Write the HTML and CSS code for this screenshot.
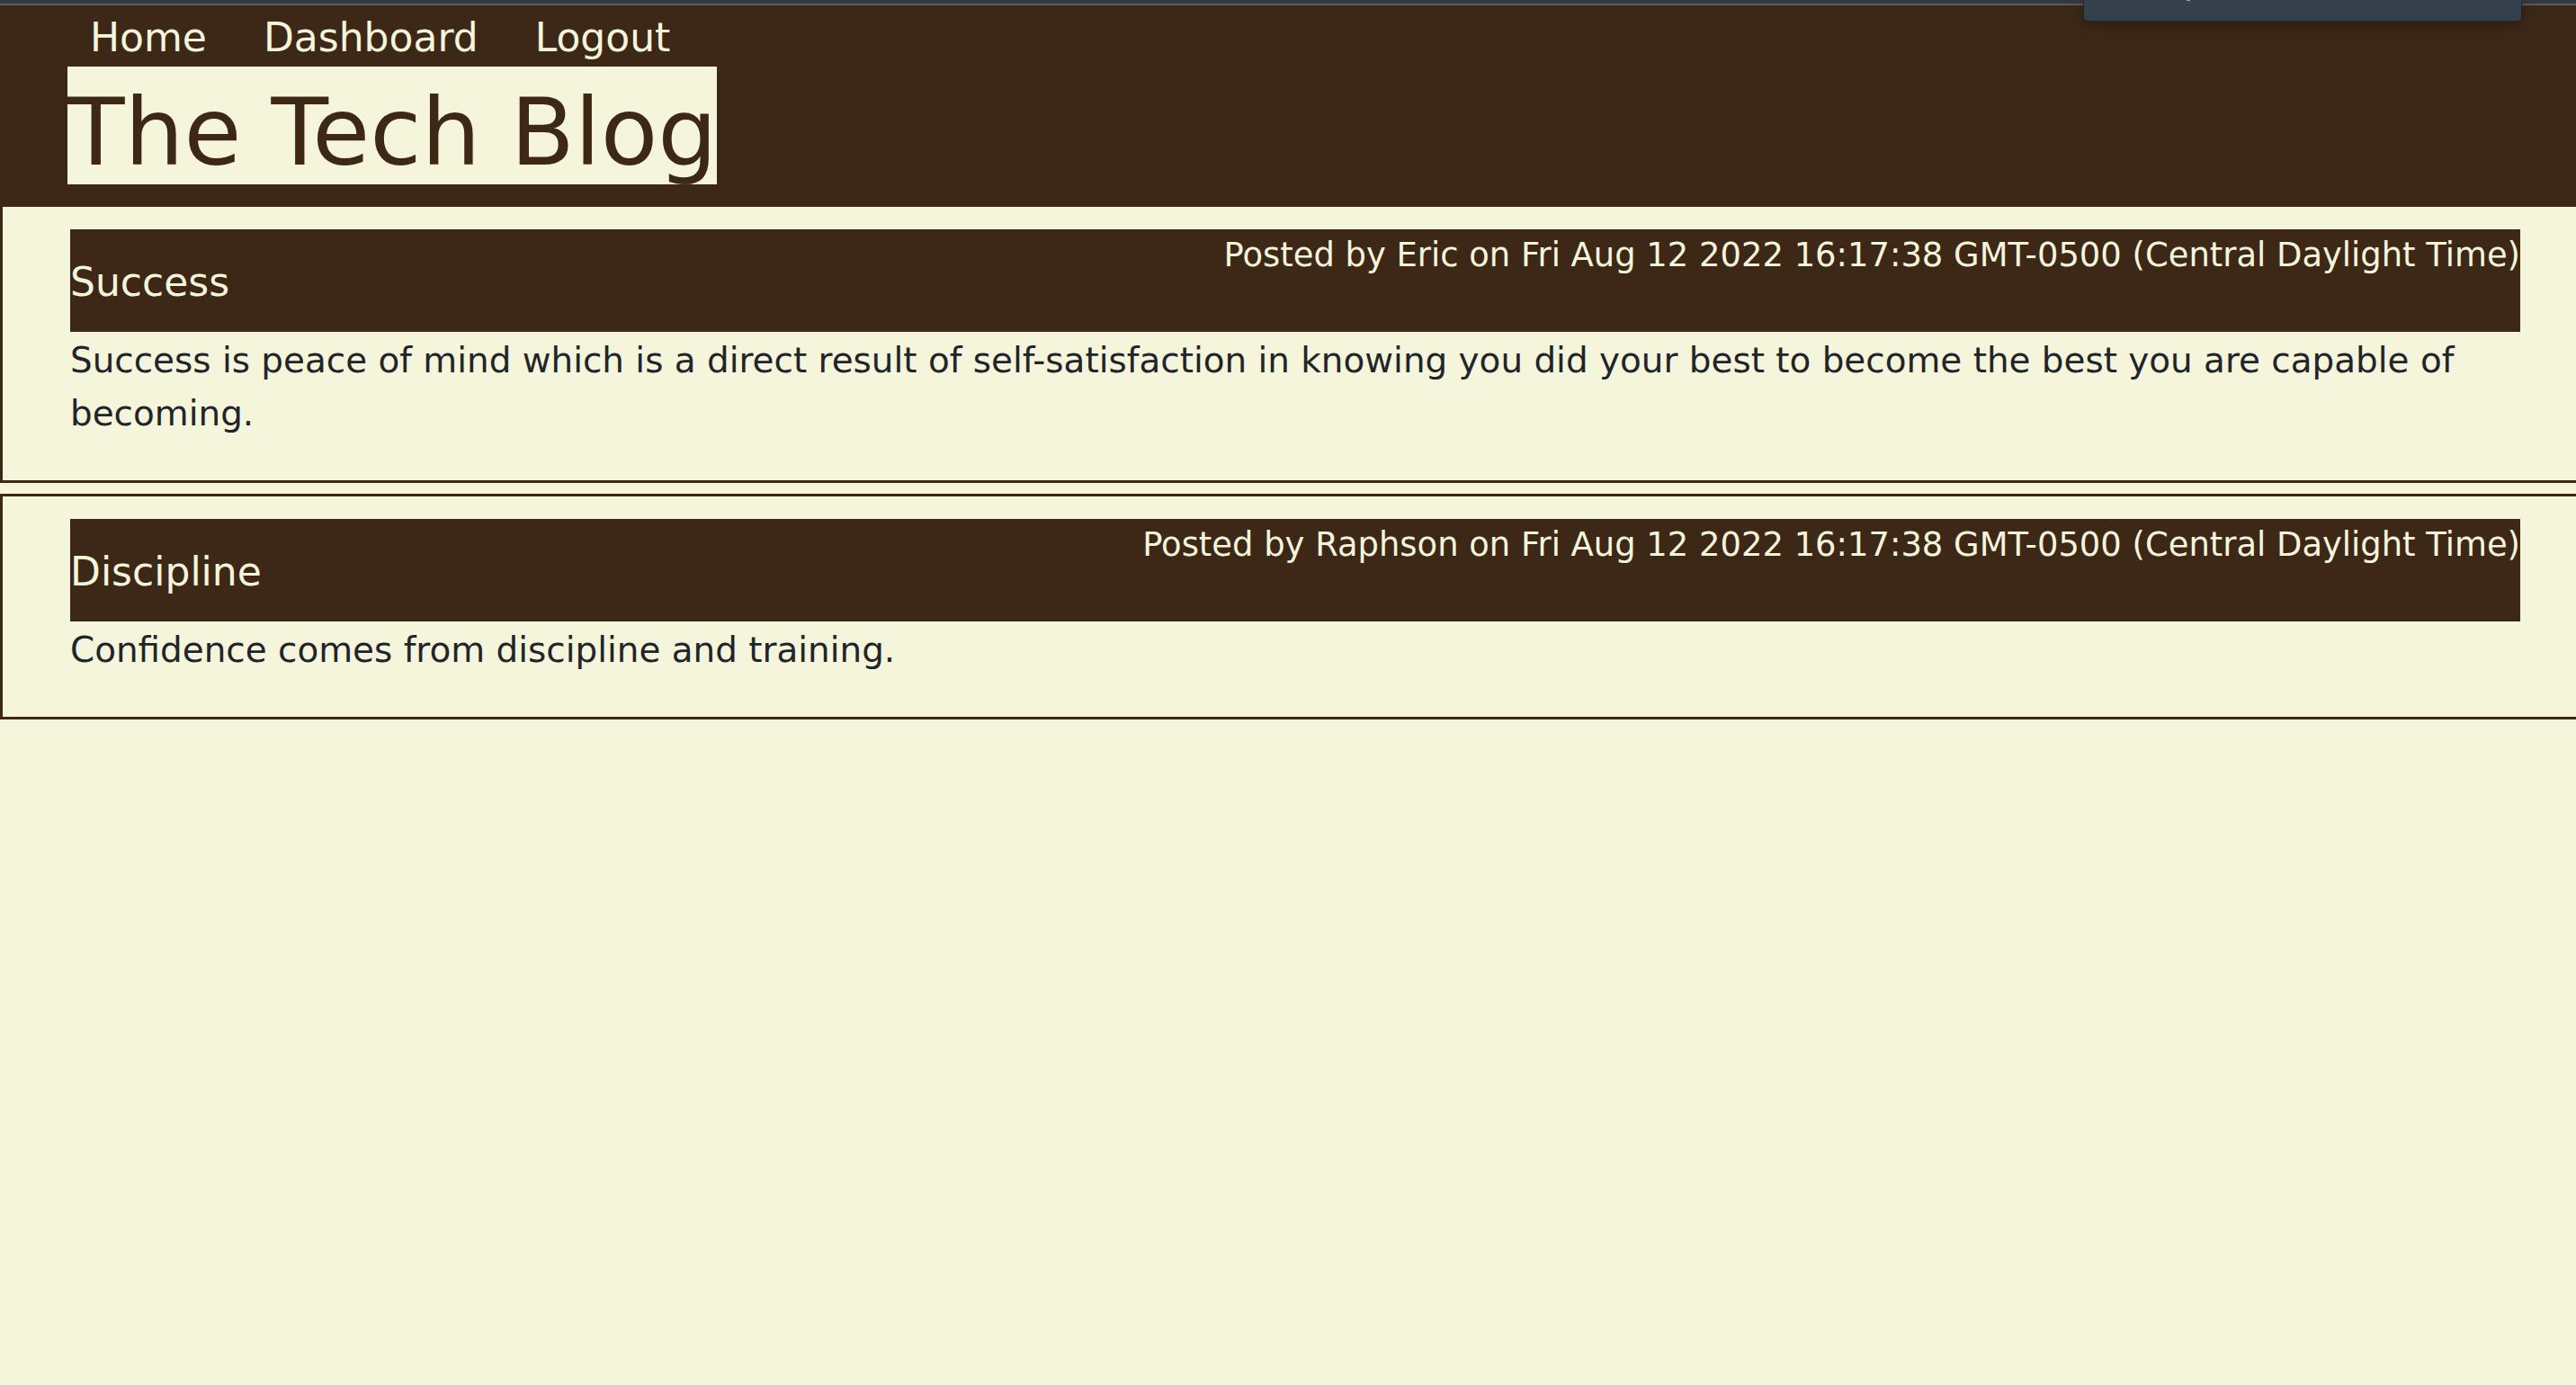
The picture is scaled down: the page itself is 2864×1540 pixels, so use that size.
FILE: index.html
```html
<!DOCTYPE html>
<html lang="en">
<head>
<meta charset="utf-8">
<title>The Tech Blog</title>
<link rel="stylesheet" href="styles.css">
</head>
<body>
<div class="chrome"></div>
<div class="overlay"><span class="overlay-mark"></span></div>
<header class="site-header">
  <nav class="nav">
    <a class="nav-link" href="#">Home</a>
    <a class="nav-link" href="#">Dashboard</a>
    <a class="nav-link" href="#">Logout</a>
  </nav>
  <h1 class="site-title">The Tech Blog</h1>
</header>
<main class="posts">
  <article class="post">
    <div class="post-head">
      <h2 class="post-title">Success</h2>
      <p class="post-meta">Posted by Eric on Fri Aug 12 2022 16:17:38 GMT-0500 (Central Daylight Time)</p>
    </div>
    <p class="post-body">Success is peace of mind which is a direct result of self-satisfaction in knowing you did your best to become the best you are capable of becoming.</p>
  </article>
  <article class="post">
    <div class="post-head">
      <h2 class="post-title">Discipline</h2>
      <p class="post-meta">Posted by Raphson on Fri Aug 12 2022 16:17:38 GMT-0500 (Central Daylight Time)</p>
    </div>
    <p class="post-body">Confidence comes from discipline and training.</p>
  </article>
</main>
</body>
</html>
```

FILE: styles.css
```css
html, body {
  margin: 0;
  padding: 0;
}

body {
  background: #f5f5dc;
  font-family: "DejaVu Sans", "Liberation Sans", sans-serif;
  color: #212529;
  overflow-x: hidden;
}

.chrome {
  height: 4px;
  background: #36383c;
  border-bottom: 2px solid #5c5d61;
}

.overlay {
  position: absolute;
  top: 0;
  left: 2316px;
  width: 488px;
  height: 24px;
  background: linear-gradient(#36434f, #323f4b);
  border-radius: 0 0 5px 5px;
  box-shadow: 0 3px 18px rgba(0, 0, 0, 0.35);
  border: 1px solid #1f262d;
  border-top: none;
  box-sizing: border-box;
}

.overlay-mark {
  position: absolute;
  top: 0;
  left: 114px;
  width: 4px;
  height: 1px;
  background: #9aa3ab;
}

.site-header {
  background: #3d2818;
  padding: 10px 0 22px 75px;
  display: flex;
  flex-direction: column;
  align-items: flex-start;
}

.nav {
  display: flex;
  gap: 63px;
  margin-left: 25px;
  line-height: 51px;
  font-size: 44px;
}

.nav-link {
  color: #f5f5dc;
  text-decoration: none;
}

.site-title {
  margin: 7px 0 0;
  padding-top: 15px;
  font-size: 104px;
  font-weight: normal;
  line-height: 116px;
  color: #3d2818;
  background: #f5f5dc;
}

.post {
  border: 3px solid #3d2818;
  border-right: none;
  padding: 25px 62px 45px 75px;
  margin-bottom: 12px;
}

.post-head {
  background: #3d2818;
  color: #f5f5dc;
  display: flex;
  justify-content: space-between;
  align-items: flex-start;
  padding-bottom: 30px;
}

.post-title {
  margin: 33px 0 0;
  font-size: 44px;
  font-weight: normal;
  line-height: 51px;
}

.post-meta {
  margin: 7px 0 0;
  font-size: 36.9px;
  line-height: 43px;
  white-space: nowrap;
}

.post-body {
  margin: 2px 0 0;
  font-size: 38.9px;
  line-height: 59px;
}
```
